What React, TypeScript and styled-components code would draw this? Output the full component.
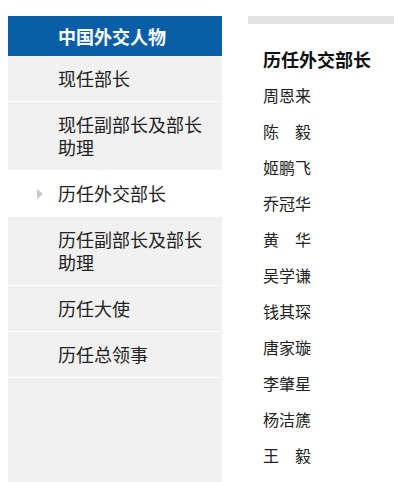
import React from "react";
import styled, { createGlobalStyle } from "styled-components";

const menu = [
  { label: "现任部长" },
  { label: "现任副部长及部长助理" },
  { label: "历任外交部长", active: true },
  { label: "历任副部长及部长助理" },
  { label: "历任大使" },
  { label: "历任总领事" },
];

const names = [
  "周恩来",
  "陈　毅",
  "姬鹏飞",
  "乔冠华",
  "黄　华",
  "吴学谦",
  "钱其琛",
  "唐家璇",
  "李肇星",
  "杨洁篪",
  "王　毅",
];

const App = () => {
  return (
    <Page>
      <GlobalStyle />
      <Sidebar>
        <SideHead>中国外交人物</SideHead>
        {menu.map((m) => (
          <MenuItem key={m.label} $active={!!m.active}>
            {m.label}
          </MenuItem>
        ))}
      </Sidebar>
      <Content>
        <TopBar />
        <Title>历任外交部长</Title>
        <NameList>
          {names.map((n) => (
            <Name key={n}>{n}</Name>
          ))}
        </NameList>
      </Content>
    </Page>
  );
};

export default App;

const GlobalStyle = createGlobalStyle`
  html, body {
    margin: 0;
    padding: 0;
    background: #ffffff;
    overflow: hidden;
  }
  body {
    font-family: "Microsoft YaHei", "Noto Sans CJK SC", sans-serif;
  }
`;

const Page = styled.div`
  display: flex;
  align-items: stretch;
  min-height: 100vh;
  box-sizing: border-box;
  padding: 16px 0 0 8px;
`;

const Sidebar = styled.div`
  width: 214px;
  flex-shrink: 0;
  background-color: #f1f1f1;
`;

const SideHead = styled.div`
  height: 40px;
  line-height: 40px;
  padding-left: 50px;
  background-color: #0a5ea8;
  color: #ffffff;
  font-size: 18px;
  font-weight: 700;
`;

const MenuItem = styled.div<{ $active: boolean }>`
  position: relative;
  padding: 11px 20px 11px 50px;
  line-height: 23px;
  font-size: 18px;
  color: #222222;
  border-bottom: 1px solid #ffffff;
  background-color: ${(p) => (p.$active ? "#ffffff" : "transparent")};
  &::before {
    content: "";
    display: ${(p) => (p.$active ? "block" : "none")};
    position: absolute;
    left: 29px;
    top: 50%;
    margin-top: -5px;
    border-style: solid;
    border-width: 5px 0 5px 6px;
    border-color: transparent transparent transparent #c9c9c9;
  }
`;

const Content = styled.div`
  flex: 1;
  margin-left: 26px;
`;

const TopBar = styled.div`
  height: 8px;
  background-color: #e3e3e3;
`;

const Title = styled.h2`
  margin: 17px 0 0 0;
  padding-left: 15px;
  line-height: 36px;
  font-size: 18px;
  font-weight: 700;
  color: #111111;
`;

const NameList = styled.ul`
  list-style: none;
  margin: 0;
  padding: 0 0 0 15px;
`;

const Name = styled.li`
  line-height: 36px;
  font-size: 16px;
  color: #222222;
`;
